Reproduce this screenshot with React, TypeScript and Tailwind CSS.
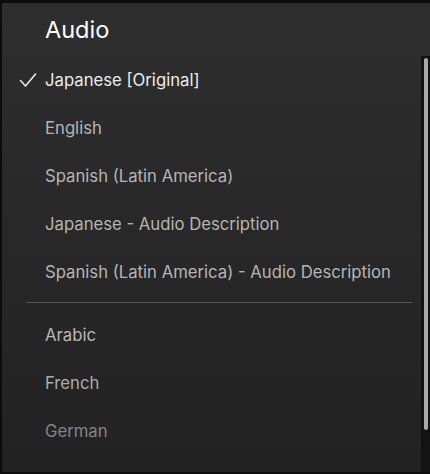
import React from 'react';

const tracks = [
  { label: 'Japanese [Original]', selected: true },
  { label: 'English' },
  { label: 'Spanish (Latin America)' },
  { label: 'Japanese - Audio Description' },
  { label: 'Spanish (Latin America) - Audio Description' },
];

const more = [
  { label: 'Arabic', tone: 'text-[#b8b8b8]' },
  { label: 'French', tone: 'text-[#acacac]' },
  { label: 'German', tone: 'text-[#858585]' },
];

function Check() {
  return (
    <svg width="18" height="16" viewBox="0 0 18 16" className="absolute left-[17px] top-1/2 -translate-y-1/2">
      <path d="M1.5 8.5 L6.5 14 L16.5 2" fill="none" stroke="#e8e8e8" strokeWidth="1.6" strokeLinecap="round" strokeLinejoin="round" />
    </svg>
  );
}

export default function App() {
  return (
    <div
      className="flex h-[474px] w-[430px] border-t-[3px] border-b-[2px] border-l-[2px] border-[#0c0c0c] bg-gradient-to-b from-[#2e2e2e] to-[#222222]"
      style={{ fontFamily: 'Inter, "Noto Sans", sans-serif' }}
    >
      <div className="flex flex-1 flex-col">
        <div className="h-[53px] pl-[43px] pt-[12px] text-[23.5px] leading-[30px] text-white">Audio</div>
        <ul>
          {tracks.map((t) => (
            <li
              key={t.label}
              className={`relative flex h-[48px] items-center pl-[43px] pt-px text-[16.7px] ${
                t.selected ? 'text-[#ececec]' : 'text-[#b5b5b5]'
              }`}
            >
              {t.selected && <Check />}
              {t.label}
            </li>
          ))}
        </ul>
        <div className="mb-[8px] ml-[24px] mr-[9px] mt-[6px] h-px bg-[#555555]" />
        <ul>
          {more.map((t) => (
            <li key={t.label} className={`flex h-[48px] items-center pl-[43px] pt-px text-[16.7px] ${t.tone}`}>
              {t.label}
            </li>
          ))}
        </ul>
      </div>
      {/* scroll track */}
      <div className="mt-[53px] flex w-[9px] justify-center bg-[#131313] pt-[2px]">
        <div className="h-[372px] w-[4px] rounded-[2px] bg-[#a9a9a9]" />
      </div>
    </div>
  );
}
